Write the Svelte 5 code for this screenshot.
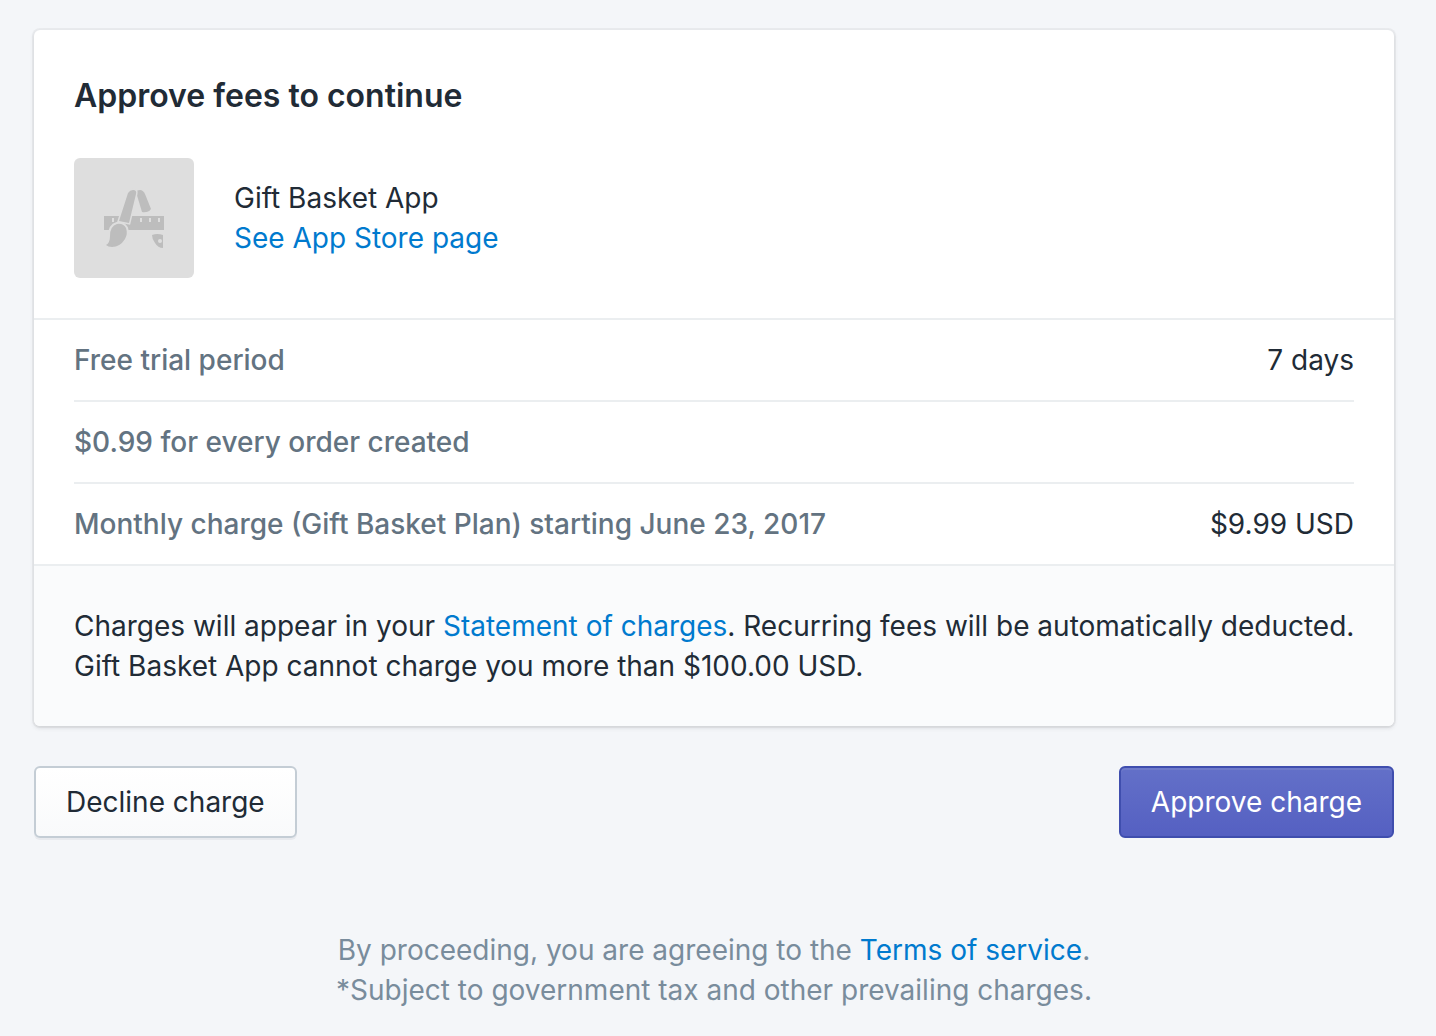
<script>
	const app = { name: 'Gift Basket App', storeUrl: '#app-store' };

	const fees = [
		{ label: 'Free trial period', value: '7 days' },
		{ label: '$0.99 for every order created', value: '' },
		{ label: 'Monthly charge (Gift Basket Plan) starting June 23, 2017', value: '$9.99 USD' }
	];
</script>

<main class="page">
	<section class="card">
		<header class="intro">
			<h1>Approve fees to continue</h1>
			<div class="app">
				<div class="app-icon">
					<svg viewBox="0 0 120 120" aria-hidden="true">
						<g fill="#bdbdbd">
							<path d="M62 34q1-2 4-2q3 0 5 4l6 15q-3 4-9 3z" />
							<path d="M30 58h60v14H30z" />
							<path d="M78 77q5-2 11 0v13q-5 0-8-5q-3-4-3-8z" />
						</g>
						<path d="M45 63l9-28q2-3 5-3q4 0 3 4l-7 29z" fill="#bdbdbd" stroke="#dedede" stroke-width="3" paint-order="stroke" />
						<path d="M43 66q6-1 9 4q2 6-1 11q-5 8-13 8q-4 0-6-2q4-2 4-9q0-10 7-12z" fill="#bdbdbd" stroke="#dedede" stroke-width="4" paint-order="stroke" stroke-linejoin="round" />
						<g fill="#dedede">
							<path d="M38 60h2v4h-2zM66 60h2v4h-2zM75 60h2v4h-2zM84 60h2v4h-2z" />
							<circle cx="86" cy="83" r="2" />
						</g>
					</svg>
				</div>
				<div>
					<p>{app.name}</p>
					<p><a href={app.storeUrl}>See App Store page</a></p>
				</div>
			</div>
		</header>

		<dl class="fees">
			{#each fees as fee}
				<div class="fee">
					<dt>{fee.label}</dt>
					<dd>{fee.value}</dd>
				</div>
			{/each}
		</dl>

		<footer class="notice">
			<p>Charges will appear in your <a href="#statement">Statement of charges</a>. Recurring fees will be automatically deducted.</p>
			<p>{app.name} cannot charge you more than $100.00 USD.</p>
		</footer>
	</section>

	<div class="actions">
		<button type="button">Decline charge</button>
		<button type="button" class="primary">Approve charge</button>
	</div>

	<div class="legal">
		<p>By proceeding, you are agreeing to the <a href="#terms">Terms of service</a>.</p>
		<p>*Subject to government tax and other prevailing charges.</p>
	</div>
</main>

<style>
	:global(body) {
		margin: 0;
		background: #f4f6f9;
	}
	.page {
		padding: 30px 42px 24px 34px;
		font-family: Inter, "Liberation Sans", sans-serif;
		font-size: 28px;
		line-height: 40px;
		color: #212b36;
	}
	h1, p, dl, dd {
		margin: 0;
	}
	a {
		color: #007ace;
		text-decoration: none;
	}
	a:hover {
		text-decoration: underline;
	}
	.card {
		background: #fff;
		border-radius: 6px;
		box-shadow: 0 0 0 2px rgba(63, 63, 68, 0.05), 0 2px 4px 0 rgba(63, 63, 68, 0.15);
		overflow: hidden;
	}
	.intro {
		padding: 40px;
		border-bottom: 2px solid #ebeef0;
	}
	h1 {
		margin-bottom: 36px;
		font-size: 32px;
		line-height: 52px;
		font-weight: 600;
	}
	.app {
		display: flex;
		align-items: center;
		gap: 40px;
	}
	.app-icon {
		width: 120px;
		height: 120px;
		border-radius: 6px;
		background: #dedede;
	}
	.app-icon svg {
		display: block;
	}
	.fees {
		padding: 0 40px;
	}
	.fee {
		display: flex;
		justify-content: space-between;
		gap: 40px;
		padding: 20px 0;
	}
	.fee + .fee {
		border-top: 2px solid #ebeef0;
	}
	dt {
		font-weight: 500;
		color: #637381;
	}
	.notice {
		padding: 40px 32px 40px 40px;
		border-top: 2px solid #ebeef0;
		background: #fafbfc;
	}
	.actions {
		display: flex;
		justify-content: space-between;
		margin-top: 40px;
	}
	button {
		padding: 14px 30px;
		border: 2px solid #c4cdd5;
		border-radius: 6px;
		background: linear-gradient(#fff, #f9fafb);
		box-shadow: 0 2px 0 rgba(22, 29, 37, 0.05);
		font: inherit;
		color: inherit;
		cursor: pointer;
	}
	.primary {
		border-color: #3f4eae;
		background: linear-gradient(#6370c8, #5560c2);
		box-shadow: inset 0 2px 0 #6f7bcb;
		color: #fff;
	}
	.legal {
		margin-top: 92px;
		text-align: center;
		color: #798c9c;
	}
</style>
